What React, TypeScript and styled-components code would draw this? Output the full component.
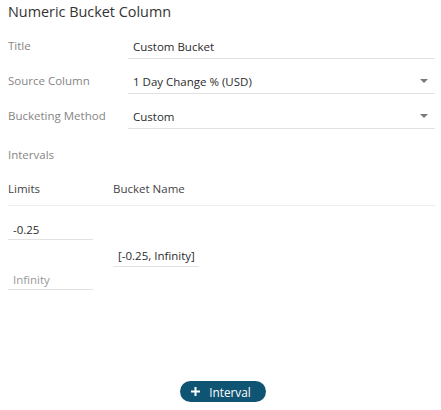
import React from "react";
import styled, { createGlobalStyle } from "styled-components";

const Global = createGlobalStyle`
  html, body { margin: 0; padding: 0; background: #ffffff; }
  body { font-family: "Open Sans", "Liberation Sans", sans-serif; }
  * { box-sizing: border-box; }
`;

const Page = styled.div`
  display: flex;
  flex-direction: column;
  min-height: 100vh;
  padding: 0 6px 8px 8px;
`;

const Heading = styled.div`
  font-size: 14.4px;
  line-height: 24px;
  height: 24px;
  color: #333;
`;

const Form = styled.div`
  display: flex;
  flex-direction: column;
  gap: 10px;
  margin-top: 10px;
`;

const Row = styled.div`
  display: grid;
  grid-template-columns: 120px 1fr;
  align-items: stretch;
  height: 25px;
`;

const Label = styled.div`
  font-size: 11.5px;
  line-height: 24px;
  color: #858585;
`;

const Field = styled.div`
  position: relative;
  display: flex;
  align-items: center;
  padding: 0 5px;
  border-bottom: 1px solid #e2e2e2;
  font-size: 11.5px;
  color: #2b2b2b;
`;

const Caret = styled.span`
  position: absolute;
  right: 7px;
  top: 50%;
  margin-top: -2px;
  width: 0;
  height: 0;
  border-left: 4px solid transparent;
  border-right: 4px solid transparent;
  border-top: 4px solid #7a7a7a;
`;

const Section = styled.div`
  margin-top: 17px;
  font-size: 11.5px;
  line-height: 18px;
  color: #858585;
`;

const TableHead = styled.div`
  display: grid;
  grid-template-columns: 105px 1fr;
  margin-top: 16px;
  padding-bottom: 7px;
  border-bottom: 1px solid #ececec;
  font-size: 11.5px;
  line-height: 18px;
  color: #444;
`;

const BucketRow = styled.div`
  display: flex;
  align-items: center;
  gap: 20px;
  margin-top: 13px;
`;

const Limits = styled.div`
  display: flex;
  flex-direction: column;
  gap: 29px;
`;

const SmallInput = styled.div<{ $w: number; $placeholder?: boolean }>`
  width: ${(p) => p.$w}px;
  height: 21px;
  padding: 0 5px;
  display: flex;
  align-items: center;
  white-space: nowrap;
  border-bottom: 1px solid #e2e2e2;
  font-size: 11.5px;
  color: ${(p) => (p.$placeholder ? "#999" : "#2b2b2b")};
`;

const BucketInput = styled(SmallInput)`
  margin-top: 3px;
`;

const Footer = styled.div`
  margin-top: auto;
  display: flex;
  justify-content: center;
`;

const AddButton = styled.button`
  display: inline-flex;
  align-items: center;
  gap: 9px;
  height: 21px;
  padding: 0 15px 0 11px;
  margin-left: 3px;
  border: none;
  border-radius: 11px;
  background: #0f5473;
  color: #ffffff;
  font-family: "Open Sans", "Liberation Sans", sans-serif;
  font-size: 11.8px;
  cursor: pointer;
`;

export default function App() {
  return (
    <>
      <Global />
      <Page>
        <Heading>Numeric Bucket Column</Heading>
        <Form>
          <Row>
            <Label>Title</Label>
            <Field>Custom Bucket</Field>
          </Row>
          <Row>
            <Label>Source Column</Label>
            <Field>
              1 Day Change % (USD)
              <Caret />
            </Field>
          </Row>
          <Row>
            <Label>Bucketing Method</Label>
            <Field>
              Custom
              <Caret />
            </Field>
          </Row>
        </Form>
        <Section>Intervals</Section>
        <TableHead>
          <span>Limits</span>
          <span>Bucket Name</span>
        </TableHead>
        <BucketRow>
          <Limits>
            <SmallInput $w={85}>-0.25</SmallInput>
            <SmallInput $w={85} $placeholder>
              Infinity
            </SmallInput>
          </Limits>
          <BucketInput $w={86}>[-0.25, Infinity]</BucketInput>
        </BucketRow>
        <Footer>
          <AddButton>
            <svg width="9" height="9" viewBox="0 0 9 9">
              <path d="M4.5 0v9M0 4.5h9" stroke="#fff" strokeWidth="2" />
            </svg>
            Interval
          </AddButton>
        </Footer>
      </Page>
    </>
  );
}
